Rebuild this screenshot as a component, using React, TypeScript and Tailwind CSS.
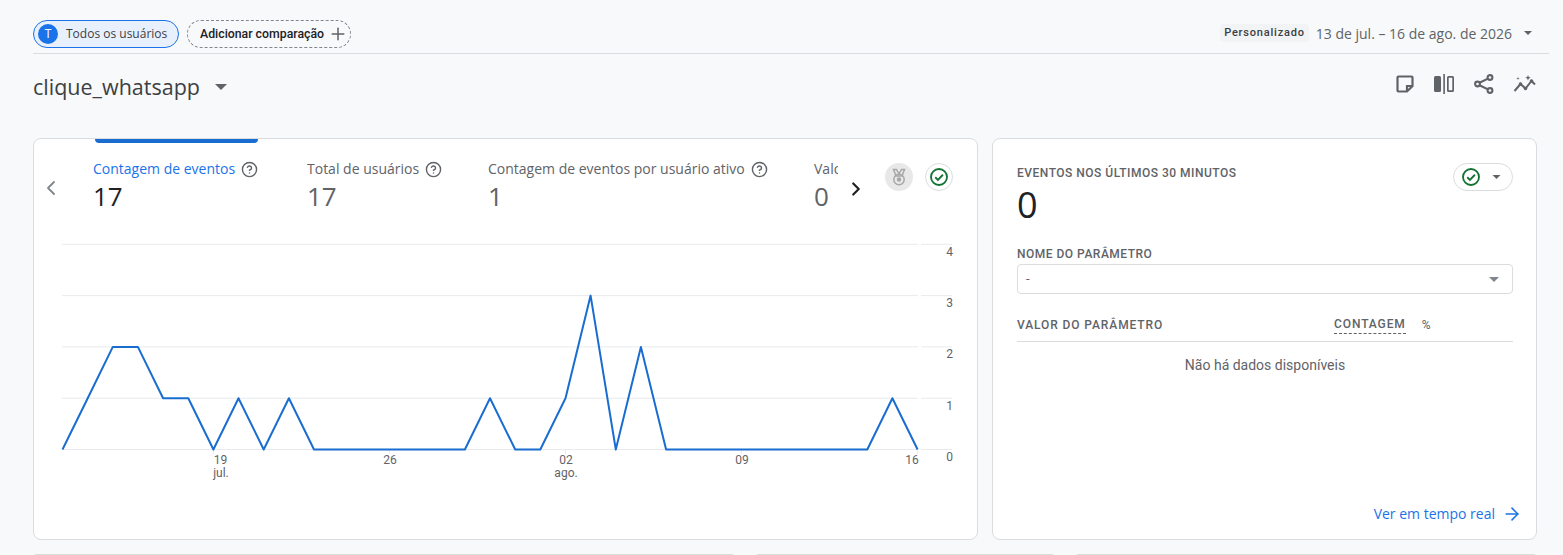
import { ChevronLeft, ChevronRight, Plus, ArrowRight, CircleHelp } from "lucide-react";

const points = [0, 1, 2, 2, 1, 1, 0, 1, 0, 1, 0, 0, 0, 0, 0, 0, 0, 1, 0, 0, 1, 3, 0, 2, 0, 0, 0, 0, 0, 0, 0, 0, 0, 1, 0];

const metrics = [
  { label: "Contagem de eventos", value: "17", active: true, width: "w-[214px]" },
  { label: "Total de usuários", value: "17", active: false, width: "w-[181px]" },
  { label: "Contagem de eventos por usuário ativo", value: "1", active: false, width: "w-[326px]" },
];

function Caret({ className }: { className: string }) {
  return (
    <svg viewBox="0 0 10 5" className={className} fill="currentColor">
      <path d="M0 0h10L5 5z" />
    </svg>
  );
}

function CheckBadge({ size }: { size: string }) {
  return (
    <svg viewBox="0 0 24 24" className={size} fill="none" stroke="#137333" strokeWidth="2.2">
      <circle cx="12" cy="12" r="9.6" />
      <path d="M7.5 12.3l3.2 3.2 6-6.2" />
    </svg>
  );
}

function Chart() {
  const x = (i: number) => 62.5 + i * 25.15;
  const y = (v: number) => 449.5 - v * 51.3;
  const line = points.map((v, i) => `${x(i).toFixed(1)},${y(v).toFixed(1)}`).join(" ");
  return (
    <svg width="943" height="260" viewBox="34 222 943 260" className="block" fontFamily="Roboto, sans-serif" fontSize="12" fill="#5f6368">
      {[0, 1, 2, 3, 4].map((v) => (
        <g key={v}>
          <line x1="62" x2="918" y1={y(v)} y2={y(v)} stroke="#e8eaed" strokeWidth="1" />
          <line x1="921" x2="952" y1={y(v)} y2={y(v)} stroke="#e8eaed" strokeWidth="1" />
          <text x="953" y={y(v) + 11.5} textAnchor="end">{v}</text>
        </g>
      ))}
      {[6, 13, 20, 27, 34].map((i) => (
        <line key={i} x1={x(i)} x2={x(i)} y1="449" y2="454" stroke="#e8eaed" />
      ))}
      <text x="220.500" y="464" textAnchor="middle">19</text>
      <text x="221" y="477" textAnchor="middle">jul.</text>
      <text x="390" y="464" textAnchor="middle">26</text>
      <text x="566" y="464" textAnchor="middle">02</text>
      <text x="566" y="477" textAnchor="middle">ago.</text>
      <text x="742" y="464" textAnchor="middle">09</text>
      <text x="912" y="464" textAnchor="middle">16</text>
      <polyline points={line} fill="none" stroke="#1a6dd0" strokeWidth="2" strokeLinejoin="round" />
    </svg>
  );
}

export default function App() {
  return (
    <div className="h-[555px] w-[1563px] overflow-hidden bg-[#f8f9fb] pl-[33px] pr-[14px] pt-[20px] font-['Open_Sans',sans-serif] text-[#202124]">
      {/* filter bar */}
      <div className="flex h-[34px] items-start justify-between border-b border-[#dadce0]">
        <div className="flex items-center gap-2">
          <div className="flex h-[28px] w-[146px] items-center gap-2 rounded-full border border-[#1a73e8] bg-[#e8f0fe] pl-1 text-[12px] text-[#3c4043]">
            <span className="flex size-[20px] items-center justify-center rounded-full bg-[#1a73e8] text-[12px] font-medium text-white">T</span>
            Todos os usuários
          </div>
          <div className="flex h-[28px] w-[164px] items-center gap-[4px] whitespace-nowrap rounded-full border border-dashed border-[#80868b] pl-[12px] font-['Roboto',sans-serif] text-[12.3px] font-medium text-[#202124]">
            Adicionar comparação
            <Plus className="size-[20px] shrink-0 text-[#5f6368]" strokeWidth={1.8} />
          </div>
        </div>
        <div className="mt-px flex h-[24px] items-center pr-[17px]">
          <span className="rounded-sm bg-[#f1f3f4] px-1 py-px font-['Roboto',sans-serif] text-[11px] font-medium tracking-[0.8px] text-[#3c4043]">Personalizado</span>
          <span className="ml-[7px] text-[14px] text-[#5f6368]">13 de jul. – 16 de ago. de 2026</span>
          <Caret className="ml-[12px] h-[4px] w-[8px] text-[#5f6368]" />
        </div>
      </div>

      {/* title row */}
      <div className="flex h-[84px] items-start justify-between pr-[12px] pt-[17px]">
        <div className="flex items-center">
          <h1 className="text-[21.5px] leading-[32px] text-[#3c4043]">clique_whatsapp</h1>
          <Caret className="ml-[15px] h-[6px] w-[12px] text-[#5f6368]" />
        </div>
        <div className="flex items-center gap-[19px] pt-[3px] text-[#5f6368]">
          <svg viewBox="0 0 20 20" className="size-[20px]" fill="none" stroke="currentColor" strokeWidth="2.200">
            <path d="M3.500 2.500h13a1 1 0 0 1 1 1v8.500l-5.500 5.500h-8.500a1 1 0 0 1-1-1v-13a1 1 0 0 1 1-1z" />
            <path d="M12 17v-5h5.500" />
          </svg>
          <svg viewBox="0 0 21 20" className="h-[20px] w-[21px]" fill="currentColor">
            <rect x="0" y="2" width="7" height="16" rx="1.500" />
            <rect x="9.300" y="0" width="1.600" height="20" />
            <path fillRule="evenodd" d="M14.500 2h4a1.500 1.500 0 0 1 1.500 1.500v13a1.500 1.500 0 0 1-1.500 1.500h-4a1.500 1.500 0 0 1-1.500-1.500v-13a1.500 1.500 0 0 1 1.500-1.500zm.2 1.700v12.600h3.600v-12.600z" />
          </svg>
          <svg viewBox="0 0 20 20" className="size-[20px]" fill="none" stroke="currentColor" strokeWidth="2.100">
            <circle cx="16" cy="3.500" r="2.400" />
            <circle cx="3.500" cy="10" r="2.400" />
            <circle cx="16" cy="16.500" r="2.400" />
            <path d="M5.500 8.800l8.500-4.200M5.500 11.200l8.500 4.200" />
          </svg>
          <svg viewBox="0 0 24 20" className="h-[20px] w-[24px]" fill="currentColor">
            <path d="M1.500 17l6-7 5 4.500 6-7.500 3.500 3.500" fill="none" stroke="currentColor" strokeWidth="2" />
            <circle cx="7.500" cy="10" r="1.800" />
            <circle cx="12.500" cy="14.500" r="1.800" />
            <circle cx="18.500" cy="7" r="1.800" />
            <path d="M15 1l.8 2 2 .8-2 .8-.8 2-.8-2-2-.8 2-.8zM5 3l.4 1.100 1.100.4-1.100.4-.4 1.100-.4-1.100-1.100-.4 1.100-.4z" />
          </svg>
        </div>
      </div>

      {/* cards */}
      <div className="flex gap-[14px]">
        <div className="relative h-[402px] w-[945px] shrink-0 overflow-hidden rounded-lg border border-[#dadce0] bg-white">
          <div className="absolute left-[61px] top-0 h-[4px] w-[163px] rounded-b bg-[#1a6dd0]" />
          <div className="flex h-[83px] items-start">
            <ChevronLeft className="ml-[5px] mt-[37px] size-[24px] shrink-0 text-[#80868b]" strokeWidth={1.800} />
            <div className="ml-[30px] flex w-[745px] overflow-hidden pt-[20px]">
              {metrics.map((m) => (
                <div key={m.label} className={`${m.width} shrink-0`}>
                  <div className={`flex items-center gap-[6px] text-[14px] leading-[20px] ${m.active ? "text-[#1a73e8]" : "text-[#5f6368]"}`}>
                    {m.label}
                    <CircleHelp className="size-[17px] text-[#5f6368]" strokeWidth={2} />
                  </div>
                  <div className={`text-[26px] leading-[34px] ${m.active ? "text-[#202124]" : "text-[#5f6368]"}`}>{m.value}</div>
                </div>
              ))}
              <div className="w-[24px] shrink-0 overflow-hidden">
                <div className="whitespace-nowrap text-[14px] leading-[20px] text-[#5f6368]">Valor</div>
                <div className="text-[26px] leading-[34px] text-[#5f6368]">0</div>
              </div>
            </div>
            <ChevronRight className="ml-[7px] mt-[39px] size-[22px] shrink-0 text-[#202124]" strokeWidth={2.400} />
            <div className="ml-[18px] mt-[24px] flex size-[28px] shrink-0 items-center justify-center rounded-full bg-[#e8e8e8]">
              <svg viewBox="0 0 20 20" className="size-[20px]" fill="none" stroke="#a8a8a8" strokeWidth="1.500">
                <path d="M4.500 2.500h3l2.500 4.500 2.500-4.500h3l-2.500 6.500h-6z" />
                <circle cx="10" cy="12.500" r="5.200" />
                <circle cx="10" cy="12.500" r="1.500" fill="#a8a8a8" />
              </svg>
            </div>
            <div className="ml-[12px] mt-[24px] flex size-[28px] shrink-0 items-center justify-center rounded-full border border-[#dadce0]">
              <CheckBadge size="size-[20px]" />
            </div>
          </div>
          <Chart />
        </div>

        <div className="flex h-[402px] w-[545px] shrink-0 flex-col rounded-lg border border-[#dadce0] bg-white pl-[24px] pr-[23px] font-['Roboto',sans-serif]">
          <div className="flex items-start justify-between pt-[24px]">
            <div>
              <div className="text-[12px] font-medium leading-[20px] tracking-[0.5px] text-[#5f6368]">EVENTOS NOS ÚLTIMOS 30 MINUTOS</div>
              <div className="font-['Open_Sans',sans-serif] text-[36px] leading-[44px] text-[#202124]">0</div>
            </div>
            <div className="flex h-[28px] w-[60px] items-center gap-[11px] rounded-full border border-[#dadce0] pl-[7px]">
              <CheckBadge size="size-[20px]" />
              <Caret className="h-[4px] w-[9px] text-[#5f6368]" />
            </div>
          </div>
          <div className="mt-[17px] text-[12px] font-medium leading-[20px] tracking-[0.5px] text-[#5f6368]">NOME DO PARÂMETRO</div>
          <div className="flex h-[30px] items-center justify-between rounded border border-[#dadce0] pl-[8px] pr-[13px] text-[13px] text-[#5f6368]">
            -
            <Caret className="h-[5px] w-[10px] text-[#80868b]" />
          </div>
          <div className="mt-[21px] flex h-[27px] items-start border-b border-[#dadce0] text-[12px] font-medium leading-[20px] tracking-[0.9px] text-[#5f6368]">
            <span className="w-[317px]">VALOR DO PARÂMETRO</span>
            <span className="border-b border-dashed border-[#5f6368] leading-[18px]">CONTAGEM</span>
            <span className="ml-[16px] font-normal">%</span>
          </div>
          <div className="mt-[13px] text-center text-[14px] leading-[20px] text-[#5f6368]">Não há dados disponíveis</div>
          <div className="mt-auto -mr-[9px] flex items-center justify-end gap-[7px] pb-[15px] font-['Open_Sans',sans-serif] text-[14px] font-medium text-[#1a73e8]">
            Ver em tempo real
            <ArrowRight className="size-[20px]" strokeWidth={1.900} />
          </div>
        </div>
      </div>

      {/* next row of cards, cut off by the window */}
      <div className="mt-[14px] flex gap-[20px]">
        <div className="h-[4px] w-[702px] rounded-t-lg border border-[#dadce0] bg-white" />
        <div className="h-[4px] w-[300px] rounded-t-lg border border-[#dadce0] bg-white" />
        <div className="h-[4px] w-[462px] rounded-t-lg border border-[#dadce0] bg-white" />
      </div>
    </div>
  );
}
